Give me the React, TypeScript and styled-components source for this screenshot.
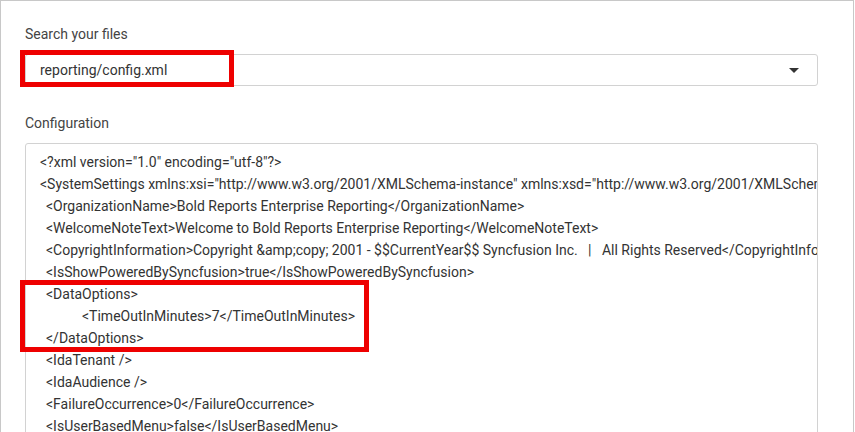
import React from "react";
import styled, { createGlobalStyle } from "styled-components";

const Global = createGlobalStyle`
    html, body { margin: 0; padding: 0; background: #fff; }
    body { font-family: Roboto, "Liberation Sans", sans-serif; color: #333; }
`;

const Frame = styled.div`
    position: relative;
    box-sizing: border-box;
    width: 854px;
    height: 432px;
    border: 1px solid #c8c8c8;
    border-bottom: none;
    padding: 24px 35px 0 24px;
    overflow: hidden;
`;

const Label = styled.div`
    font-size: 14px;
    color: #444;
    line-height: 18px;
    margin-bottom: 11px;
`;

const Dropdown = styled.div`
    display: flex;
    align-items: center;
    justify-content: space-between;
    box-sizing: border-box;
    height: 32px;
    border: 1px solid #d2d2d2;
    border-radius: 3px;
    padding: 0 18px 0 14px;
    font-size: 14px;
    color: #333;
    margin-bottom: 28px;
`;

const Caret = styled.span`
    width: 0;
    height: 0;
    border-left: 5px solid transparent;
    border-right: 5px solid transparent;
    border-top: 5px solid #333;
`;

const Editor = styled.div`
    box-sizing: border-box;
    height: 320px;
    border: 1px solid #d2d2d2;
    border-radius: 3px;
    padding: 7px 0 0 14px;
    overflow: hidden;
`;

const Line = styled.div<{ $indent: number }>`
    font-size: 14px;
    line-height: 22px;
    white-space: pre;
    color: #333;
    padding-left: ${(p) => [0, 6, 42][p.$indent]}px;
`;

const Highlight = styled.div<{ $x: number; $y: number; $w: number; $h: number }>`
    position: absolute;
    left: ${(p) => p.$x}px;
    top: ${(p) => p.$y}px;
    width: ${(p) => p.$w}px;
    height: ${(p) => p.$h}px;
    box-sizing: border-box;
    border: 5px solid #ee0000;
`;

const lines: [number, string][] = [
    [0, '<?xml version="1.0" encoding="utf-8"?>'],
    [0, '<SystemSettings xmlns:xsi="http://www.w3.org/2001/XMLSchema-instance" xmlns:xsd="http://www.w3.org/2001/XMLSchema">'],
    [1, "<OrganizationName>Bold Reports Enterprise Reporting</OrganizationName>"],
    [1, "<WelcomeNoteText>Welcome to Bold Reports Enterprise Reporting</WelcomeNoteText>"],
    [1, "<CopyrightInformation>Copyright &amp;copy; 2001 - $$CurrentYear$$ Syncfusion Inc.   |   All Rights Reserved</CopyrightInformation>"],
    [1, "<IsShowPoweredBySyncfusion>true</IsShowPoweredBySyncfusion>"],
    [1, "<DataOptions>"],
    [2, "<TimeOutInMinutes>7</TimeOutInMinutes>"],
    [1, "</DataOptions>"],
    [1, "<IdaTenant />"],
    [1, "<IdaAudience />"],
    [1, "<FailureOccurrence>0</FailureOccurrence>"],
    [1, "<IsUserBasedMenu>false</IsUserBasedMenu>"],
];

const App: React.FC = () => (
    <>
        <Global />
        <Frame>
            <Label>Search your files</Label>
            <Dropdown>
                <span>reporting/config.xml</span>
                <Caret />
            </Dropdown>
            <Label>Configuration</Label>
            <Editor>
                {lines.map(([indent, text], i) => (
                    <Line key={i} $indent={indent}>
                        {text}
                    </Line>
                ))}
            </Editor>
            <Highlight $x={19} $y={49} $w={214} $h={37} />
            <Highlight $x={19} $y={279} $w={349} $h={72} />
        </Frame>
    </>
);

export default App;
